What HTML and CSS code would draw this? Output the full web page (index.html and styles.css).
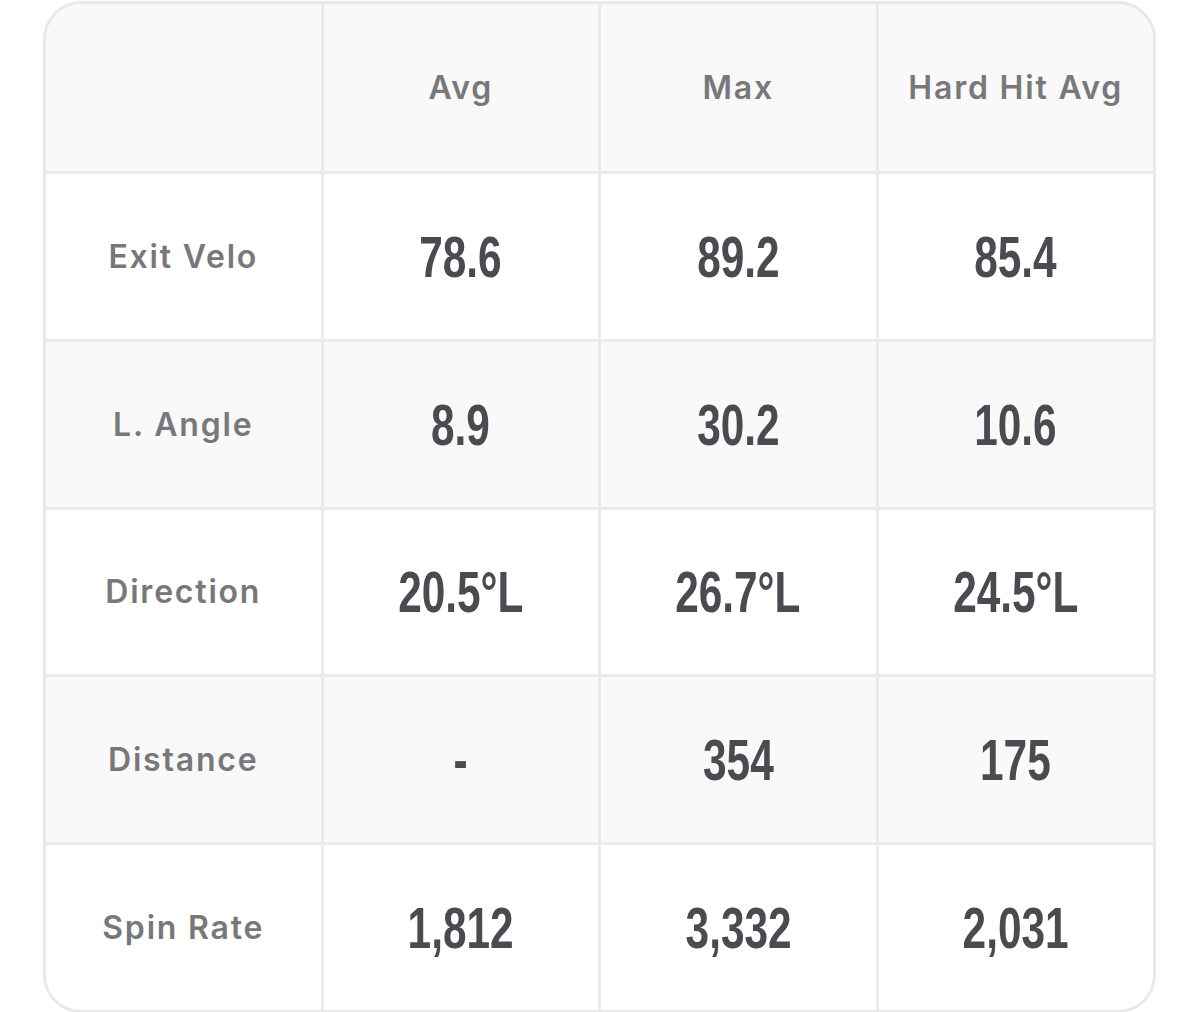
FILE: index.html
```html
<!DOCTYPE html>
<html>
<head>
<meta charset="utf-8">
<link rel="stylesheet" href="styles.css">
</head>
<body>
<div class="table">
  <div class="cell head"></div>
  <div class="cell head"><span class="label">Avg</span></div>
  <div class="cell head"><span class="label">Max</span></div>
  <div class="cell head"><span class="label">Hard Hit Avg</span></div>

  <div class="cell"><span class="label">Exit Velo</span></div>
  <div class="cell"><span class="num">78.6</span></div>
  <div class="cell"><span class="num">89.2</span></div>
  <div class="cell"><span class="num">85.4</span></div>

  <div class="cell alt"><span class="label">L. Angle</span></div>
  <div class="cell alt"><span class="num">8.9</span></div>
  <div class="cell alt"><span class="num">30.2</span></div>
  <div class="cell alt"><span class="num">10.6</span></div>

  <div class="cell"><span class="label">Direction</span></div>
  <div class="cell"><span class="num">20.5°L</span></div>
  <div class="cell"><span class="num">26.7°L</span></div>
  <div class="cell"><span class="num">24.5°L</span></div>

  <div class="cell alt"><span class="label">Distance</span></div>
  <div class="cell alt"><span class="num">-</span></div>
  <div class="cell alt"><span class="num">354</span></div>
  <div class="cell alt"><span class="num">175</span></div>

  <div class="cell"><span class="label">Spin Rate</span></div>
  <div class="cell"><span class="num">1,812</span></div>
  <div class="cell"><span class="num">3,332</span></div>
  <div class="cell"><span class="num">2,031</span></div>
</div>
</body>
</html>
```

FILE: styles.css
```css
html, body {
  margin: 0;
  padding: 0;
  background: #ffffff;
}

body {
  padding: 1px 44px 0 43px;
}

.table {
  display: grid;
  grid-template-columns: repeat(4, 1fr);
  grid-template-rows: 167px repeat(5, 1fr);
  gap: 3px;
  height: 1006px;
  background: #ebebeb;
  border: 3px solid #e9e9e9;
  border-radius: 38px;
  overflow: hidden;
}

.cell {
  background: #ffffff;
  display: flex;
  align-items: center;
  justify-content: center;
}

.cell.head,
.cell.alt {
  background: #f9f9f9;
}

.label {
  font-family: "Inter", "Liberation Sans", sans-serif;
  font-weight: 600;
  font-size: 32px;
  letter-spacing: 1.8px;
  color: #78787b;
}

.num {
  display: inline-block;
  font-family: "Liberation Sans Narrow", "Liberation Sans", sans-serif;
  font-weight: 700;
  font-size: 58px;
  color: #4a4b50;
  transform: scaleX(0.73);
}
```
